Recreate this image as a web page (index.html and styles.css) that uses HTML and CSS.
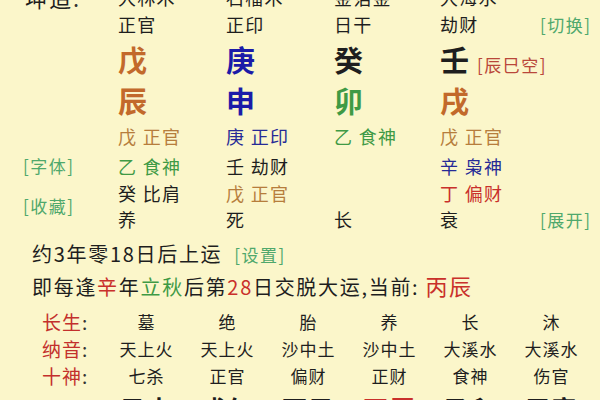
FILE: index.html
```html
<!DOCTYPE html>
<html lang="zh-CN">
<head>
<meta charset="utf-8">
<title>排盘</title>
<link rel="stylesheet" href="styles.css">
</head>
<body>
<div class="page">
  <div class="pillars">
    <div class="title">坤造<span class="colon">:</span></div>
    <div>大林木</div><div>石榴木</div><div>金箔金</div><div>大海水</div><div></div>

    <div></div>
    <div>正官</div><div>正印</div><div>日干</div><div>劫财</div><div class="link right">[切换]</div>

    <div></div>
    <div class="big or">戊</div><div class="big bl">庚</div><div class="big">癸</div>
    <div class="big">壬<span class="kong">[辰巳空]</span></div><div></div>

    <div></div>
    <div class="big or">辰</div><div class="big bl">申</div><div class="big gr">卯</div><div class="big or">戌</div><div></div>

    <div></div>
    <div class="or2">戊 正官</div><div class="bl2">庚 正印</div><div class="gr">乙 食神</div><div class="or2">戊 正官</div><div></div>

    <div class="link">[字体]</div>
    <div class="gr">乙 食神</div><div>壬 劫财</div><div></div><div class="bl2">辛 枭神</div><div></div>

    <div class="link span2">[收藏]</div>
    <div>癸 比肩</div><div class="or2">戊 正官</div><div></div><div class="rd">丁 偏财</div><div></div>

    <div>养</div><div>死</div><div>长</div><div>衰</div><div class="link right">[展开]</div>
  </div>

  <p class="line first">约3年零18日后上运<span class="link">[设置]</span></p>
  <p class="line">即每逢<span class="rd">辛</span>年<span class="gr">立秋</span>后第<span class="rd">28</span>日交脱大运,当前: <span class="rd cur">丙辰</span></p>

  <div class="tbl">
    <div class="lab">长生<span class="colon">:</span></div>
    <div>墓</div><div>绝</div><div>胎</div><div>养</div><div>长</div><div>沐</div>

    <div class="lab">纳音<span class="colon">:</span></div>
    <div>天上火</div><div>天上火</div><div>沙中土</div><div>沙中土</div><div>大溪水</div><div>大溪水</div>

    <div class="lab">十神<span class="colon">:</span></div>
    <div>七杀</div><div>正官</div><div>偏财</div><div>正财</div><div>食神</div><div>伤官</div>

    <div class="lab">大运<span class="colon">:</span></div>
    <div class="dy">己未</div><div class="dy">戊午</div><div class="dy">丁巳</div><div class="dy rd">丙辰</div><div class="dy">乙卯</div><div class="dy">甲寅</div>
  </div>
</div>
</body>
</html>
```

FILE: styles.css
```css
html, body {
  margin: 0;
  padding: 0;
  background: #fbf6ca;
  overflow: hidden;
}
body {
  font-family: "Noto Sans CJK SC", "Noto Sans", sans-serif;
  color: #1e1e1e;
  font-weight: 400;
}
.page {
  margin-top: -16px;
}
.pillars {
  display: grid;
  grid-template-columns: 95px 108px 108px 106px 100px 1fr;
  grid-template-rows: 26px 28px 42px 40px 32px 27px 27px 26px;
  align-items: center;
  padding: 0 10px 0 23px;
  font-size: 18px;
  letter-spacing: 1.3px;
  line-height: 1;
  white-space: nowrap;
}
.title {
  font-size: 22px;
  letter-spacing: 2px;
  padding-left: 2px;
}
.colon {
  color: #333;
}
.link {
  color: #4fa86c;
  font-size: 17px;
  letter-spacing: 1.5px;
}
.right {
  justify-self: end;
}
.span2 {
  grid-row: span 2;
}
.big {
  font-size: 29px;
  font-weight: 700;
  letter-spacing: 0;
}
.kong {
  font-size: 17px;
  font-weight: 400;
  letter-spacing: 1.5px;
  color: #b9473a;
  margin-left: 8px;
}
.or { color: #c2692b; }
.or2 { color: #b67d3c; }
.bl { color: #1b1ba8; }
.bl2 { color: #262a96; }
.gr { color: #3f9a45; }
.rd { color: #c9302b; }

.line {
  margin: 0 0 0 32px;
  font-size: 20px;
  letter-spacing: 1.7px;
  line-height: 30px;
  white-space: nowrap;
}
.line.first {
  margin-top: 7px;
}
.line .link {
  margin-left: 12px;
}
.cur {
  font-size: 22px;
  letter-spacing: 1.5px;
}

.tbl {
  display: grid;
  grid-template-columns: 64px repeat(6, 81px);
  grid-template-rows: 27px 27px 27px 38px;
  align-items: center;
  justify-items: center;
  margin-top: 6px;
  padding-left: 42px;
  font-size: 17px;
  letter-spacing: 1px;
  line-height: 1;
  white-space: nowrap;
}
.tbl .lab {
  justify-self: start;
  color: #c3302c;
  font-size: 19px;
  letter-spacing: 1px;
}
.dy {
  font-size: 25px;
  font-weight: 700;
  letter-spacing: 1.5px;
}
```
